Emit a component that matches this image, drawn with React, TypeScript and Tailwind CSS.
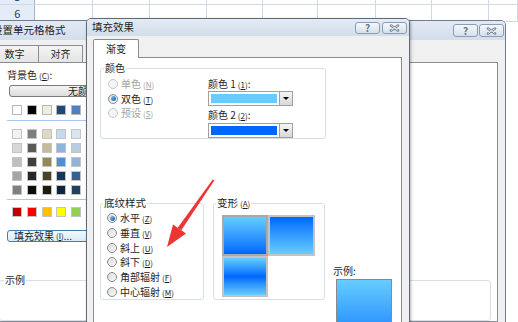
import React from "react";

const COLS = [60, 60, 60, 58, 58, 60, 59, 60, 30];

const THEME = [
  "bg-[#ffffff]", "bg-[#000000]", "bg-[#eeece1]", "bg-[#1f497d]", "bg-[#4f81bd]",
  "bg-[#c0504d]", "bg-[#9bbb59]", "bg-[#8064a2]", "bg-[#4bacc6]", "bg-[#f79646]",
];

const TINTS = [
  ["bg-[#f2f2f2]", "bg-[#7f7f7f]", "bg-[#ddd9c3]", "bg-[#c6d9f0]", "bg-[#dbe5f1]", "bg-[#f2dcdb]", "bg-[#ebf1dd]", "bg-[#e5e0ec]", "bg-[#dbeef3]", "bg-[#fdeada]"],
  ["bg-[#d8d8d8]", "bg-[#595959]", "bg-[#c4bd97]", "bg-[#8db3e2]", "bg-[#b8cce4]", "bg-[#e5b9b7]", "bg-[#d7e3bc]", "bg-[#ccc1d9]", "bg-[#b7dde8]", "bg-[#fbd5b5]"],
  ["bg-[#bfbfbf]", "bg-[#3f3f3f]", "bg-[#938953]", "bg-[#548dd4]", "bg-[#95b3d7]", "bg-[#d99694]", "bg-[#c3d69b]", "bg-[#b2a2c7]", "bg-[#92cddc]", "bg-[#fac08f]"],
  ["bg-[#a5a5a5]", "bg-[#262626]", "bg-[#494429]", "bg-[#17365d]", "bg-[#366092]", "bg-[#953734]", "bg-[#76923c]", "bg-[#5f497a]", "bg-[#31859b]", "bg-[#e36c09]"],
  ["bg-[#7f7f7f]", "bg-[#0c0c0c]", "bg-[#1d1b10]", "bg-[#0f243e]", "bg-[#244061]", "bg-[#632423]", "bg-[#4f6128]", "bg-[#3f3151]", "bg-[#205867]", "bg-[#974806]"],
];

const STANDARD = [
  "bg-[#c00000]", "bg-[#ff0000]", "bg-[#ffc000]", "bg-[#ffff00]", "bg-[#92d050]",
  "bg-[#00b050]", "bg-[#00b0f0]", "bg-[#0070c0]", "bg-[#002060]", "bg-[#7030a0]",
];

const SHADING = [
  { label: "水平", key: "Z", checked: true },
  { label: "垂直", key: "V" },
  { label: "斜上", key: "U" },
  { label: "斜下", key: "D" },
  { label: "角部辐射", key: "F" },
  { label: "中心辐射", key: "M" },
];

const Key = ({ k }: { k: string }) => (
  <span className="ml-[2px] text-[8px]">
    (<span className="underline">{k}</span>)
  </span>
);

const Radio = ({ checked = false, disabled = false }: { checked?: boolean; disabled?: boolean }) => (
  <span
    className={`flex h-[10px] w-[10px] shrink-0 items-center justify-center rounded-full border ${
      disabled
        ? "border-[#c8c8c8] bg-[#f4f4f4]"
        : "border-[#8a8a8a] bg-gradient-to-br from-[#dcdcdc] to-[#fbfbfb]"
    }`}
  >
    {checked && <span className="h-[5px] w-[5px] rounded-full bg-gradient-to-br from-[#7cc4f4] to-[#0f5ca8]" />}
  </span>
);

const RadioRow = ({
  label,
  k,
  checked,
  disabled,
  h = "h-[14.5px]",
}: {
  label: string;
  k: string;
  checked?: boolean;
  disabled?: boolean;
  h?: string;
}) => (
  <div className={`flex items-center gap-[3px] ${h} text-[10px] leading-none ${disabled ? "text-[#a3a3a3]" : "text-[#1e1e1e]"}`}>
    <Radio checked={checked} disabled={disabled} />
    <span>
      {label}
      <Key k={k} />
    </span>
  </div>
);

const ColorPick = ({ swatch }: { swatch: string }) => (
  <div className="flex h-[15px] w-[85px] border border-[#a0a0a0] bg-white">
    <div className="flex-1 p-[2px]">
      <div className={`h-full ${swatch}`} />
    </div>
    <div className="flex w-[13px] items-center justify-center border-l border-[#a0a0a0] bg-gradient-to-b from-[#f6f6f6] to-[#d8d8d8]">
      <div className="h-0 w-0 border-l-[3px] border-r-[3px] border-t-[3px] border-l-transparent border-r-transparent border-t-black" />
    </div>
  </div>
);

const TitleButtons = ({ h, gap }: { h: string; gap: string }) => (
  <div className={`flex ${gap}`}>
    <div className={`flex ${h} w-[25px] items-center justify-center rounded-[3px] border border-[#8d9cb1] bg-gradient-to-b from-[#f5f8fb] to-[#d6e0eb] text-[10px] font-bold leading-none text-[#67768b]`}>
      ?
    </div>
    <div className={`flex ${h} w-[25px] items-center justify-center rounded-[3px] border border-[#8d9cb1] bg-gradient-to-b from-[#f5f8fb] to-[#d6e0eb]`}>
      <svg width="11" height="8" viewBox="0 0 11 8">
        <path d="M2 1.5L9 6.5M9 1.5L2 6.5" stroke="#6b7a8f" strokeWidth="2.6" strokeLinecap="round" />
        <path d="M2 1.5L9 6.5M9 1.5L2 6.5" stroke="#f4f6f9" strokeWidth="0.9" strokeLinecap="round" />
      </svg>
    </div>
  </div>
);

const Sheet = () => (
  <div className="-mt-[12px] flex flex-col">
    {["5", "6"].map((n) => (
      <div key={n} className="flex h-[17px] border-b border-[#d0d7e5]">
        <div className="flex w-[37px] items-center justify-center border-r border-[#9eb6ce] bg-[#e4ecf7] text-[11px] leading-none text-[#27415f]">
          {n}
        </div>
        {COLS.map((w, i) => (
          <div key={i} className="border-r border-[#d0d7e5]" style={{ width: w }} />
        ))}
      </div>
    ))}
  </div>
);

const FormatCells = () => (
  <div className="absolute left-[-22px] top-[20px] flex h-[310px] w-[528px] flex-col rounded-t-[5px] border border-[#6e7c8c] bg-[#f0f0f0]">
    <div className="flex h-[19px] items-center justify-between rounded-t-[4px] bg-gradient-to-b from-[#e2eaf4] to-[#d3dfec] pl-[13px] pr-[1px]">
      <span className="text-[10.5px] leading-none text-[#1e1e1e]">设置单元格格式</span>
      <TitleButtons h="h-[13px]" gap="gap-[1px]" />
    </div>
    <div className="flex flex-1 flex-col pl-[6px] pr-[7px] pt-[5px]">
      <div className="ml-[5px] flex">
        <div className="flex h-[17px] w-[49px] items-center justify-center border border-b-0 border-[#898c95] bg-gradient-to-b from-[#f4f4f4] to-[#e4e4e4] text-[10px] leading-none text-[#1e1e1e]">
          数字
        </div>
        <div className="-ml-px flex h-[17px] w-[45px] items-center justify-center border border-b-0 border-[#898c95] bg-gradient-to-b from-[#f4f4f4] to-[#e4e4e4] text-[10px] leading-none text-[#1e1e1e]">
          对齐
        </div>
      </div>
      <div className="flex h-[260px] flex-col border border-[#898c95] bg-white pl-[21px] text-[#1e1e1e]">
        <div className="mt-[5px] h-[14px] text-[10px] leading-[14px]">
          背景色<Key k="C" />:
        </div>
        <div className="ml-[2px] mt-[3px] flex h-[15px] w-[148px] items-center justify-center rounded-[3px] border border-[#7a7a7a] bg-gradient-to-b from-[#f4f4f4] to-[#dcdcdc] text-[10px] leading-none">
          无颜色
        </div>
        <div className="ml-[5px] mt-[8px] flex gap-x-[4.75px]">
          {THEME.map((c, i) => (
            <div key={i} className={`h-[10px] w-[10px] border border-[#b8b8b8] ${c}`} />
          ))}
        </div>
        <div className="mt-[5px] h-px w-[160px] bg-[#a9c6ec]" />
        <div className="ml-[5px] mt-[8px] flex flex-col gap-y-[4px]">
          {TINTS.map((row, r) => (
            <div key={r} className="flex gap-x-[4.75px]">
              {row.map((c, i) => (
                <div key={i} className={`h-[10px] w-[10px] border border-[#c4c4c4] ${c}`} />
              ))}
            </div>
          ))}
        </div>
        <div className="mt-[4px] h-px w-[160px] bg-[#a9c6ec]" />
        <div className="ml-[5px] mt-[7px] flex gap-x-[4.75px]">
          {STANDARD.map((c, i) => (
            <div key={i} className={`h-[10px] w-[10px] border border-[#c4c4c4] ${c}`} />
          ))}
        </div>
        <div className="mt-[13px] flex h-[16px] w-[96px] items-center rounded-[3px] border border-[#3c7fb1] bg-gradient-to-b from-[#f2f9fe] to-[#d7ecfa] pl-[6px] text-[10px] leading-none">
          填充效果<Key k="I" />...
        </div>
        <fieldset className="-ml-[8px] mt-[32px] h-[60px] w-[492px] rounded-[3px] border border-[#d5dfe5]">
          <legend className="ml-[4px] px-[1px] text-[10px] leading-[12px]">示例</legend>
        </fieldset>
      </div>
    </div>
  </div>
);

const FillEffects = () => (
  <div className="absolute left-[86px] top-[18px] flex h-[320px] w-[324px] flex-col rounded-t-[5px] border border-[#5d6b7b] bg-[#f0f0f0] shadow-[1px_1px_3px_rgba(0,0,0,0.3)]">
    <div className="flex h-[21px] items-center justify-between rounded-t-[4px] bg-gradient-to-b from-[#e3ebf5] to-[#d2deeb] pl-[5px] pr-[2px]">
      <span className="text-[10.5px] leading-none text-[#1e1e1e]">填充效果</span>
      <TitleButtons h="h-[12px]" gap="gap-[2px]" />
    </div>
    <div className="flex flex-1 flex-col pl-[6px] pr-[7px] pt-[3px] text-[#1e1e1e]">
      <div className="relative z-10 -mb-px flex h-[19px] w-[46px] items-center justify-center rounded-t-[2px] border border-b-0 border-[#898c95] bg-white text-[10px] leading-none">
        渐变
      </div>
      <div className="flex h-[280px] flex-col border border-[#898c95] bg-white">
        <fieldset className="ml-[6px] mt-[4px] h-[82px] w-[226px] rounded-[3px] border border-[#d5dfe5]">
          <legend className="ml-[3px] px-[1px] text-[10px] leading-[12px]">颜色</legend>
          <div className="mt-[3px] flex">
            <div className="flex w-[107px] flex-col pl-[7px]">
              <RadioRow label="单色" k="N" disabled />
              <RadioRow label="双色" k="T" checked />
              <RadioRow label="预设" k="S" disabled />
            </div>
            <div className="flex flex-col text-[10px]">
              <div className="h-[13px] leading-[13px]">
                颜色 1<Key k="1" />:
              </div>
              <div className="mt-[1px]">
                <ColorPick swatch="bg-[#66ccff]" />
              </div>
              <div className="mt-[2px] h-[14px] leading-[14px]">
                颜色 2<Key k="2" />:
              </div>
              <div className="mt-[1px]">
                <ColorPick swatch="bg-[#0066ff]" />
              </div>
            </div>
          </div>
        </fieldset>

        <div className="ml-[6px] mt-[58px] flex items-start">
          <fieldset className="h-[103px] w-[104px] rounded-[3px] border border-[#d5dfe5]">
            <legend className="ml-[2px] px-[1px] text-[10.5px] leading-[12px]">底纹样式</legend>
            <div className="mt-[2px] flex flex-col pl-[6px]">
              {SHADING.map((s) => (
                <RadioRow key={s.key} label={s.label} k={s.key} checked={s.checked} h="h-[14.7px]" />
              ))}
            </div>
          </fieldset>

          <fieldset className="ml-[9px] h-[103px] w-[112px] rounded-[3px] border border-[#d5dfe5]">
            <legend className="ml-[2px] px-[1px] text-[10.5px] leading-[12px]">
              变形<Key k="A" />
            </legend>
            <div className="ml-[8px] mt-[5px] grid grid-cols-[46px_47px] grid-rows-[41px_41px] gap-0">
              <div className="border-2 border-[#a9a9a9] bg-gradient-to-b from-[#66ccff] to-[#0066ff]" />
              <div className="border-2 border-[#c4c4c4] bg-gradient-to-b from-[#0066ff] to-[#66ccff]" />
              <div className="border-2 border-[#c4c4c4] bg-gradient-to-b from-[#66ccff] via-[#0066ff] to-[#66ccff]" />
            </div>
          </fieldset>

          <div className="ml-[8px] mt-[68px] flex flex-col">
            <div className="h-[11px] text-[10px] leading-[11px]">示例:</div>
            <div className="ml-[3px] mt-[3px] h-[80px] w-[56px] border border-[#8a8a8a] bg-gradient-to-b from-[#66ccff] to-[#0066ff]" />
          </div>
        </div>
      </div>
    </div>
  </div>
);

const Arrow = () => (
  <svg className="pointer-events-none absolute left-0 top-0" width="518" height="322" viewBox="0 0 518 322">
    <polygon points="214.3,180.6 212.7,179.4 177.7,227.7 181.3,230.3" fill="#ef3434" />
    <polygon points="167,247 173,224.4 186,233.6" fill="#ef3434" />
  </svg>
);

export default function App() {
  return (
    <div className="relative h-[322px] w-[518px] overflow-hidden bg-white font-['Noto_Sans_CJK_SC','Noto_Sans',sans-serif]">
      <Sheet />
      <FormatCells />
      <FillEffects />
      <Arrow />
    </div>
  );
}
